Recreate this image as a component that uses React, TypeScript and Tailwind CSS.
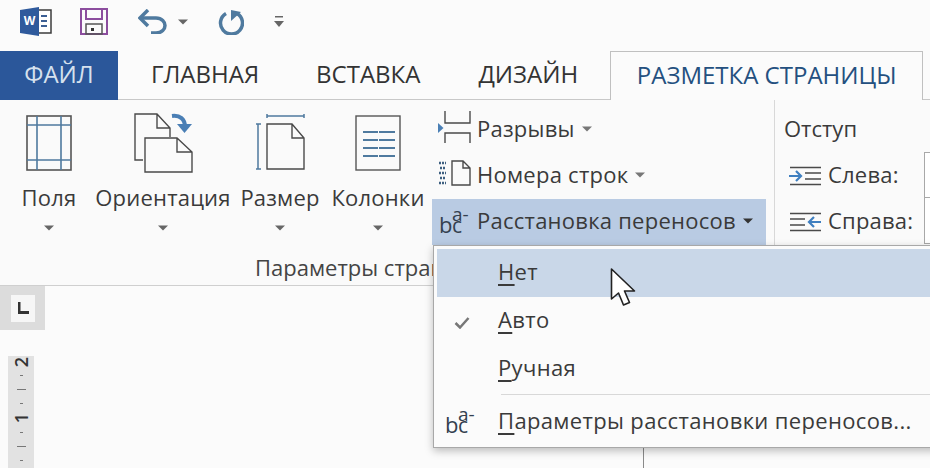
import React from "react";

const blue = "#4f7a9f";
const ink = "#4a4a4a";

function Caret({ color = "#666" }: { color?: string }) {
  return (
    <svg width="10" height="6" viewBox="0 0 10 6" className="shrink-0">
      <path d="M0 0.5h10L5 5.5z" fill={color} />
    </svg>
  );
}

// the "bc a-" glyph used on the hyphenation button and in the menu
function Hyphenate() {
  return (
    <svg width="36" height="44" viewBox="0 -6 36 44" fontFamily="Open Sans" fill="#34404f">
      <text x="0" y="27" fontSize="22">b</text>
      <text x="13" y="27" fontSize="21">c</text>
      <text x="13" y="15" fontSize="19">a-</text>
    </svg>
  );
}

function LargeButton({ label, width, icon }: { label: string; width: string; icon: React.ReactNode }) {
  return (
    <div className={`flex flex-col items-center shrink-0 ${width}`}>
      <div className="h-[64px] flex items-end">{icon}</div>
      <div className="mt-[11px] h-[30px] leading-[30px] whitespace-nowrap tracking-[0.2px]">{label}</div>
      <div className="mt-[13px]">
        <Caret />
      </div>
    </div>
  );
}

function MarginsIcon() {
  return (
    <svg width="46" height="56" viewBox="0 0 46 56" fill="none">
      <rect x="1" y="1" width="44" height="54" stroke="#555" strokeWidth="1.6" />
      <path d="M11 1v54M35 1v54M1 10h44M1 45h44" stroke={blue} strokeWidth="1.6" />
    </svg>
  );
}

function OrientationIcon() {
  return (
    <svg width="59" height="60" viewBox="0 0 59 60" fill="none" className="-mb-[2px]">
      <path d="M9 47H1V1h22l13 14v9M23 1v14h13" stroke={ink} strokeWidth="1.4" />
      <path d="M11 59V25h32l15 14v20zM43 25v14h15" stroke={ink} strokeWidth="1.4" fill="#fafafa" />
      <path d="M38 3c8-1 13 3 13 11" stroke="#4a7fb5" strokeWidth="4" />
      <path d="M43 11h15l-7.500 9z" fill="#4a7fb5" />
    </svg>
  );
}

function SizeIcon() {
  return (
    <svg width="49" height="56" viewBox="0 0 49 56" fill="none" className="mb-[1px]">
      <path d="M11 2h37M11 0v4M48 0v4M2 10v45M0 10h5M0 55h5" stroke={blue} strokeWidth="1.500" />
      <path d="M11 55V10h25l12 14v31zM36 10v14h12" stroke={ink} strokeWidth="1.4" />
    </svg>
  );
}

function ColumnsIcon() {
  return (
    <svg width="46" height="56" viewBox="0 0 46 56" fill="none">
      <rect x="1" y="1" width="44" height="54" stroke="#555" strokeWidth="1.4" />
      <path d="M8 17h15M24 17h16M8 25h15M24 25h16M8 33h15M24 33h16M8 41h15M24 41h16" stroke={blue} strokeWidth="1.8" />
    </svg>
  );
}

function BreaksIcon() {
  return (
    <svg width="33" height="32" viewBox="0 0 33 32" fill="none" className="mb-[6px]">
      <path d="M7 0v12h25V0M7 32V22h25v10" stroke={ink} strokeWidth="1.4" />
      <path d="M0 12l5.500 5L0 22z" fill="#4a7fb5" />
    </svg>
  );
}

function LineNumbersIcon() {
  return (
    <svg width="33" height="26" viewBox="0 0 33 26" fill="none" className="mb-[6px]">
      <path d="M1 3h7M2 8h6M1 13h7M2 18h6M1 23h7" stroke="#3e5f80" strokeWidth="2.400" strokeDasharray="2 1" />
      <path d="M14 25V1h11l7 7v17zM25 1v7h7" stroke={ink} strokeWidth="1.4" />
    </svg>
  );
}

function IndentIcon({ flip }: { flip?: boolean }) {
  return (
    <svg width="32" height="20" viewBox="0 0 32 20" fill="none">
      {flip ? (
        <>
          <path d="M1 1.500h31M1 7h15M1 13h15M1 18.500h31" stroke={ink} strokeWidth="1.500" />
          <path d="M32 10H20M25 5l-5 5 5 5" stroke="#3f7fc0" strokeWidth="2.200" />
        </>
      ) : (
        <>
          <path d="M1 1.500h31M16 7h16M16 13h16M1 18.500h31" stroke={ink} strokeWidth="1.500" />
          <path d="M0 10h12M7 5l5 5-5 5" stroke="#3f7fc0" strokeWidth="2.200" />
        </>
      )}
    </svg>
  );
}

function SmallRow({ icon, label, active }: { icon: React.ReactNode; label: string; active?: boolean }) {
  return (
    <div className={`flex items-center h-[46px] ${active ? "bg-[#b9cbe3]" : ""}`}>
      <div className="w-[45px] flex justify-end shrink-0 pr-[6px]">{icon}</div>
      <span className="whitespace-nowrap tracking-[0.25px] pb-[4px]">{label}</span>
      <span className="ml-[7px] pb-[2px]">
        <Caret color={active ? "#333" : "#777"} />
      </span>
    </div>
  );
}

function MenuItem({ first, rest, active, check }: { first: string; rest: string; active?: boolean; check?: boolean }) {
  return (
    <div className={`flex items-center h-[48px] ${active ? "bg-[#c9d7e8]" : ""}`}>
      <div className="w-[61px] flex justify-center shrink-0 pr-[11px] pt-[4px]">
        {check && (
          <svg width="16" height="12" viewBox="0 0 16 12" fill="none">
            <path d="M1.500 6l4.500 4.500L14.500 1" stroke="#777" strokeWidth="2.500" />
          </svg>
        )}
      </div>
      <span className="whitespace-nowrap tracking-[0.35px] pb-[4px]">
        <span className="underline underline-offset-[4px] decoration-[1.5px]">{first}</span>
        {rest}
      </span>
    </div>
  );
}

function Ticks() {
  return (
    <>
      <div className="h-[15px] flex items-center"><i className="block w-[3px] h-px bg-[#777]" /></div>
      <div className="h-[15px] flex items-center"><i className="block w-[9px] h-px bg-[#777]" /></div>
      <div className="h-[15px] flex items-center"><i className="block w-[3px] h-px bg-[#777]" /></div>
    </>
  );
}

export default function App() {
  return (
    <div className="relative w-[930px] h-[468px] overflow-hidden bg-[#fbfbfb] text-[#3a3a3a] font-['Open_Sans',sans-serif] text-[22px]">
      {/* Quick access */}
      <div className="h-[50px] flex items-center pl-[20px] pb-[7px]">
        <svg width="32" height="29" viewBox="0 0 32 29" fill="none">
          <path d="M11 3h20v23H11" stroke="#3c3c3c" strokeWidth="1.500" fill="#fff" />
          <path d="M21 9h6M21 14h6M21 19h6" stroke="#3c5f94" strokeWidth="2" />
          <path d="M0 3l19-3v29L0 26z" fill="#2f5a9c" />
          <text x="9.500" y="18" fontSize="12" fontWeight="700" fill="#fff" textAnchor="middle" fontFamily="Open Sans">W</text>
        </svg>
        <svg width="28" height="27" viewBox="0 0 28 27" fill="none" className="ml-[28px]">
          <path d="M1 1h26v25H1z" stroke="#8c4d9e" strokeWidth="2" />
          <path d="M6 1v10h16V1" stroke="#8c4d9e" strokeWidth="2" />
          <rect x="6" y="16" width="16" height="10" stroke="#555" strokeWidth="1.500" />
          <rect x="11" y="20" width="3" height="3" fill="#333" />
        </svg>
        <svg width="29" height="25" viewBox="0 0 29 25" fill="none" className="ml-[30px]">
          <path d="M2 9h16c6 0 9 4 9 7.500S24 24 18 24h-5" stroke={blue} strokeWidth="3.500" />
          <path d="M10 1L2 9l8 8" stroke={blue} strokeWidth="3.500" />
        </svg>
        <span className="ml-[11px]">
          <Caret />
        </span>
        <svg width="26" height="26" viewBox="0 0 26 26" fill="none" className="ml-[30px]">
          <path d="M8 4.500a11 11 0 1 0 11 0" stroke={blue} strokeWidth="3.500" />
          <path d="M13 1v11l10-9z" fill={blue} />
        </svg>
        <svg width="10" height="13" viewBox="0 0 10 13" className="ml-[30px]">
          <path d="M1 1h8v1.500H1z" fill="#666" />
          <path d="M0 6h10L5 12z" fill="#666" />
        </svg>
      </div>

      {/* Tabs */}
      <div className="h-[50px] flex items-center border-b border-[#c8c8c8] text-[24px]">
        <div className="w-[118px] h-full bg-[#2b579a] text-[#d6e1ee] flex items-center justify-center shrink-0 -mb-px pb-[2px]">ФАЙЛ</div>
        <div className="ml-[33px] text-[#333] pb-[2px]">ГЛАВНАЯ</div>
        <div className="ml-[57px] text-[#333] pb-[2px]">ВСТАВКА</div>
        <div className="ml-[58px] text-[#333] pb-[2px]">ДИЗАЙН</div>
        <div className="ml-[32px] w-[313px] h-full flex items-center justify-center border border-b-0 border-[#c0c0c0] bg-[#fbfbfb] text-[#24507f] -mb-px pb-[2px]">РАЗМЕТКА СТРАНИЦЫ</div>
      </div>

      {/* Ribbon */}
      <div className="h-[186px] flex border-b border-[#cfcfcf] bg-[#fafafa]">
        <div className="w-[775px] shrink-0 border-r border-[#d8d8d8] mb-[40px]">
          <div className="flex pl-[6px] pt-[7px]">
            <LargeButton label="Поля" width="w-[86px]" icon={<MarginsIcon />} />
            <LargeButton label="Ориентация" width="w-[142px]" icon={<OrientationIcon />} />
            <LargeButton label="Размер" width="w-[92px]" icon={<SizeIcon />} />
            <LargeButton label="Колонки" width="w-[104px]" icon={<ColumnsIcon />} />
            <div className="ml-[2px] w-[334px]">
              <SmallRow icon={<BreaksIcon />} label="Разрывы" />
              <SmallRow icon={<LineNumbersIcon />} label="Номера строк" />
              <SmallRow icon={<div className="-mr-[4px]"><Hyphenate /></div>} label="Расстановка переносов" active />
            </div>
          </div>
          <div className="pl-[255px] mt-[8px] leading-[28px] whitespace-nowrap text-[#444]">Параметры страницы</div>
        </div>
        <div className="w-[149px] shrink-0 pl-[9px] pt-[7px]">
          <div className="h-[46px] flex items-center pb-[4px]">Отступ</div>
          <div className="h-[46px] flex items-center">
            <div className="w-[44px] pl-[5px]"><IndentIcon /></div>
            <span className="pb-[4px] tracking-[0.2px]">Слева:</span>
          </div>
          <div className="h-[46px] flex items-center">
            <div className="w-[44px] pl-[5px]"><IndentIcon flip /></div>
            <span className="pb-[4px] tracking-[0.2px]">Справа:</span>
          </div>
        </div>
        <div className="mt-[52px] flex-1 h-[92px] border border-r-0 border-[#a8a8a8] bg-white">
          <div className="h-[45px] border-b border-[#a8a8a8]" />
        </div>
      </div>

      {/* Document */}
      <div className="w-[644px] h-[182px] border-r border-[#8a8a8a]">
        <div className="w-[45px] h-[44px] bg-[#dcdcdc] flex items-center justify-center">
          <div className="w-[24px] h-[27px] bg-[#f6f6f6] flex items-center justify-center">
            <svg width="12" height="12" viewBox="0 0 12 12">
              <path d="M1 0h2.500v9H12v3H1z" fill="#333" />
            </svg>
          </div>
        </div>
        <div className="ml-[8px] mt-[26px] w-[26px] h-[112px] bg-[#e2e2e2] flex flex-col items-center text-[#333] text-[18px] font-semibold leading-none">
          <div className="h-[12px] flex items-center"><span className="-rotate-90">2</span></div>
          <Ticks />
          <div className="h-[15px] flex items-center"><span className="-rotate-90">1</span></div>
          <Ticks />
        </div>
      </div>

      {/* Dropdown */}
      <div className="absolute left-[433px] top-[245px] w-[540px] h-[203px] pt-[3px] pl-[3px] bg-[#fbfbfb] border border-[#a8a8a8] shadow-[0_3px_8px_rgba(0,0,0,0.25)]">
        <MenuItem first="Н" rest="ет" active />
        <MenuItem first="А" rest="вто" check />
        <MenuItem first="Р" rest="учная" />
        <div className="ml-[64px] h-px bg-[#d8d8d8] mt-[1px]" />
        <div className="flex items-center h-[54px]">
          <div className="w-[61px] flex justify-center shrink-0 pr-[9px]"><Hyphenate /></div>
          <span className="whitespace-nowrap tracking-[0.35px] pb-[4px]">
            <span className="underline underline-offset-[4px] decoration-[1.5px]">П</span>араметры расстановки переносов...
          </span>
        </div>
      </div>

      {/* Cursor */}
      <svg width="27" height="39" viewBox="0 0 27 39" className="absolute left-[610px] top-[268px]">
        <path d="M1.500 1v30l7-6 5 12 6-2.500-5-11.500h10z" fill="#fff" stroke="#222" strokeWidth="1.600" strokeLinejoin="round" />
      </svg>
    </div>
  );
}
